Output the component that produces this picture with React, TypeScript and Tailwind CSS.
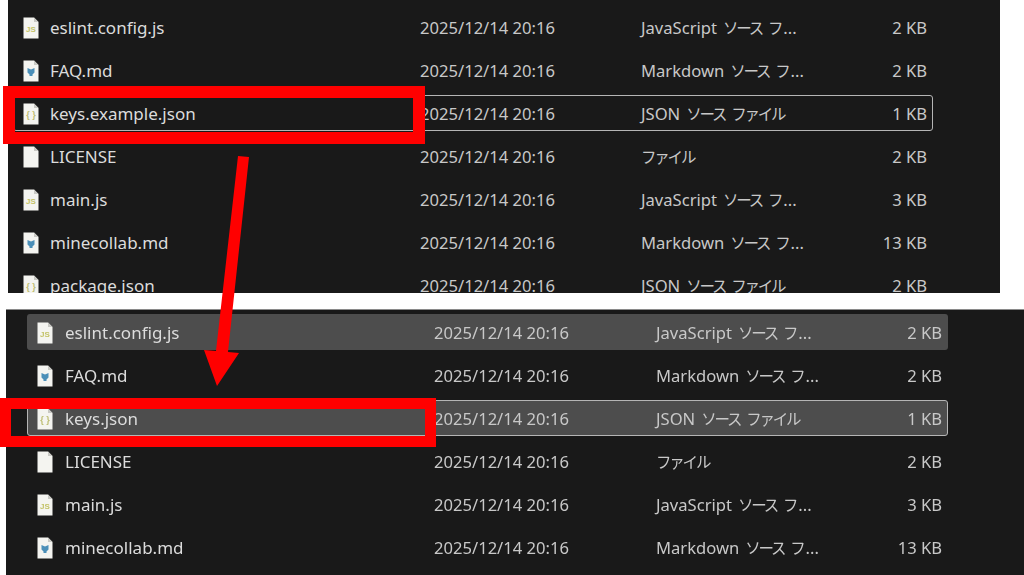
const topFiles = [
  { name: "eslint.config.js", kind: "js", type: "JavaScript", jp: "ソース フ", more: true, size: "2 KB" },
  { name: "FAQ.md", kind: "md", type: "Markdown", jp: "ソース フ", more: true, size: "2 KB" },
  { name: "keys.example.json", kind: "json", type: "JSON", jp: "ソース ファイル", size: "1 KB", outlined: true },
  { name: "LICENSE", kind: "file", type: "", jp: "ファイル", size: "2 KB" },
  { name: "main.js", kind: "js", type: "JavaScript", jp: "ソース フ", more: true, size: "3 KB" },
  { name: "minecollab.md", kind: "md", type: "Markdown", jp: "ソース フ", more: true, size: "13 KB" },
  { name: "package.json", kind: "json", type: "JSON", jp: "ソース ファイル", size: "2 KB" },
];

const bottomFiles = [
  { name: "eslint.config.js", kind: "js", type: "JavaScript", jp: "ソース フ", more: true, size: "2 KB", hover: true },
  { name: "FAQ.md", kind: "md", type: "Markdown", jp: "ソース フ", more: true, size: "2 KB" },
  { name: "keys.json", kind: "json", type: "JSON", jp: "ソース ファイル", size: "1 KB", outlined: true, hover: true },
  { name: "LICENSE", kind: "file", type: "", jp: "ファイル", size: "2 KB" },
  { name: "main.js", kind: "js", type: "JavaScript", jp: "ソース フ", more: true, size: "3 KB" },
  { name: "minecollab.md", kind: "md", type: "Markdown", jp: "ソース フ", more: true, size: "13 KB" },
];

const FileIcon = ({ kind }: { kind: string }) => (
  <svg width="16" height="22" viewBox="0 0 16 22" className="shrink-0">
    <path d="M0.5 0.5H11L15.5 5V21.5H0.5Z" fill="#f4f4f0" />
    <path d="M11 0.5V5H15.5Z" fill="#c9c9c4" />
    {kind === "js" && (
      <text x="8" y="15" textAnchor="middle" fontSize="8" fontWeight="700" fill="#c3c266" fontFamily="'Liberation Sans', sans-serif">
        JS
      </text>
    )}
    {kind === "json" && (
      <text x="8" y="15" textAnchor="middle" fontSize="9" fontWeight="700" fill="#bcbc70" fontFamily="'Liberation Sans', sans-serif">
        {"{ }"}
      </text>
    )}
    {kind === "md" && <path d="M4.5 8L8 9.5L11.5 8V12.5L9.5 14.5V16H6.5V14.5L4.5 12.5Z" fill="#4b8fb8" />}
  </svg>
);

const Row = ({ file, lower }: { file: any; lower?: boolean }) => (
  <div className="h-[43px] py-1">
    <div
      className={`grid h-[36px] items-center rounded-[3px] border pt-[1px] ${
        lower ? "grid-cols-[37px_369px_222px_1fr]" : "grid-cols-[36px_370px_221px_1fr]"
      } ${file.hover ? "bg-[#4d4d4d]" : ""} ${file.outlined ? "border-[#b5b5b5]" : "border-transparent"}`}
    >
      <div className="pl-[9px]">
        <FileIcon kind={file.kind} />
      </div>
      <span className="text-[17px] text-[#dcdcdc]">{file.name}</span>
      <span className="pt-[1px] text-[16.6px] text-[#c8c8c8]">2025/12/14 20:16</span>
      <div className="flex items-center justify-between pt-[1px] pr-[5px] text-[#c8c8c8]">
        <span className="whitespace-nowrap">
          {file.type && <span className="mr-[6px] text-[16.6px]">{file.type}</span>}
          <span className="text-[15.5px] tracking-[-2.2px] [word-spacing:4px]">{file.jp}</span>
          {file.more && <span className="ml-[2px] text-[16.6px]">...</span>}
        </span>
        <span className="text-[16.6px]">{file.size}</span>
      </div>
    </div>
  </div>
);

export default function App() {
  return (
    <div
      className="relative h-[575px] w-[1024px] overflow-hidden bg-white"
      style={{ fontFamily: "'Noto Sans', 'Noto Sans CJK JP', sans-serif" }}
    >
      <div className="blur-[0.5px]">
        <div className="ml-2 h-[293px] w-[992px] overflow-hidden bg-[#191919] pt-[5px] pr-[67px] pl-[5px]">
          {topFiles.map((file) => (
            <Row key={file.name} file={file} />
          ))}
        </div>
        <div className="mt-4 ml-[6px] h-[266px] w-[1018px] overflow-hidden border-t border-[#8a8a8a] bg-[#191919] pr-[76px] pl-[21px]">
          {bottomFiles.map((file) => (
            <Row key={file.name} file={file} lower />
          ))}
        </div>
      </div>

      <div className="absolute top-[86px] left-[3px] h-[58px] w-[422px] border-[12px] border-[#ff0000]" />
      <div className="absolute top-[398px] left-0 h-[49px] w-[436px] border-[11px] border-[#ff0000]" />
      <svg className="absolute top-0 left-0" width="1024" height="575" viewBox="0 0 1024 575">
        <polygon points="238,156 249,157 228,352 239,353 217,386 204,350 216,351" fill="#ff0000" />
      </svg>
    </div>
  );
}
